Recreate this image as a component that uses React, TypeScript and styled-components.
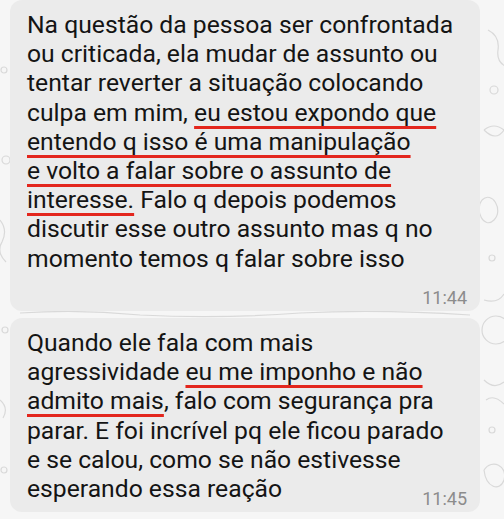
import React from 'react';
import styled, { createGlobalStyle } from 'styled-components';

const GlobalStyle = createGlobalStyle`
  html, body {
    margin: 0;
    padding: 0;
    background: #f6f6f6;
  }
`;

const Screen = styled.div`
  position: relative;
  width: 504px;
  height: 519px;
  overflow: hidden;
  box-sizing: border-box;
  padding: 0 24px 0 10px;
  background: #f6f6f6;
  display: flex;
  flex-direction: column;
  gap: 7px;
  font-family: Roboto, 'Noto Sans', sans-serif;
`;

const Wallpaper = styled.svg`
  position: absolute;
  inset: 0;
  width: 504px;
  height: 519px;
`;

const Bubble = styled.div`
  position: relative;
  z-index: 1;
  background: #ebebeb;
  border-radius: 12px;
  padding: 10px 13px 9px 17px;
  color: #141414;
  font-size: 24.7px;
  line-height: 29.2px;
  white-space: pre;
`;

const Marked = styled.span`
  text-decoration: underline;
  text-decoration-color: #e3261d;
  text-decoration-thickness: 3px;
  text-underline-offset: 5px;
  text-decoration-skip-ink: none;
`;

const Spacer = styled.span`
  display: inline-block;
  width: 70px;
`;

const Time = styled.span`
  position: absolute;
  right: 13px;
  bottom: 3px;
  font-size: 18px;
  line-height: 20px;
  color: #8c8c8c;
`;

export default function App() {
  return (
    <>
      <GlobalStyle />
      <Screen>
        <Wallpaper viewBox="0 0 504 519">
          <g fill="none" stroke="#d9d9d9" strokeWidth="1.2">
            <circle cx="4" cy="70" r="3" />
            <circle cx="6" cy="160" r="4" />
            <path d="M0 220 q8 10 2 22 q-6 10 4 20" />
            <circle cx="5" cy="330" r="3" />
            <path d="M0 400 q9 8 3 18" />
            <circle cx="4" cy="470" r="3" />
            <path d="M488 30 q12 6 10 20 q-2 14 12 18" />
            <circle cx="494" cy="90" r="4" />
            <path d="M484 130 q10 -8 20 0 q-8 12 -20 0" />
            <path d="M482 200 c10 -10 22 10 12 20 c-10 10 -20 -10 -12 -20" />
            <circle cx="492" cy="258" r="3" />
            <path d="M484 300 q14 4 20 -6" />
            <circle cx="496" cy="330" r="14" />
            <path d="M484 380 q10 10 20 2 M486 400 q8 -6 18 4" />
            <circle cx="492" cy="430" r="3" />
            <path d="M484 470 c8 -12 24 -4 20 10 c-4 12 -18 8 -20 -10" />
            <path d="M20 313 q60 -4 120 2 q80 4 160 -2 q80 -4 170 2" />
          </g>
        </Wallpaper>

        <Bubble>
          {'Na questão da pessoa ser confrontada\nou criticada, ela mudar de assunto ou\ntentar reverter a situação colocando\nculpa em mim, '}
          <Marked>eu estou expondo que</Marked>
          {'\n'}
          <Marked>entendo q isso é uma manipulação</Marked>
          {'\n'}
          <Marked>e volto a falar sobre o assunto de</Marked>
          {'\n'}
          <Marked>interesse.</Marked>
          {' Falo q depois podemos\ndiscutir esse outro assunto mas q no\nmomento temos q falar sobre isso\n'}
          <Spacer />
          <Time>11:44</Time>
        </Bubble>

        <Bubble>
          {'Quando ele fala com mais\nagressividade '}
          <Marked>eu me imponho e não</Marked>
          {'\n'}
          <Marked>admito mais</Marked>
          {', falo com segurança pra\nparar. E foi incrível pq ele ficou parado\ne se calou, como se não estivesse\nesperando essa reação'}
          <Spacer />
          <Time>11:45</Time>
        </Bubble>
      </Screen>
    </>
  );
}
